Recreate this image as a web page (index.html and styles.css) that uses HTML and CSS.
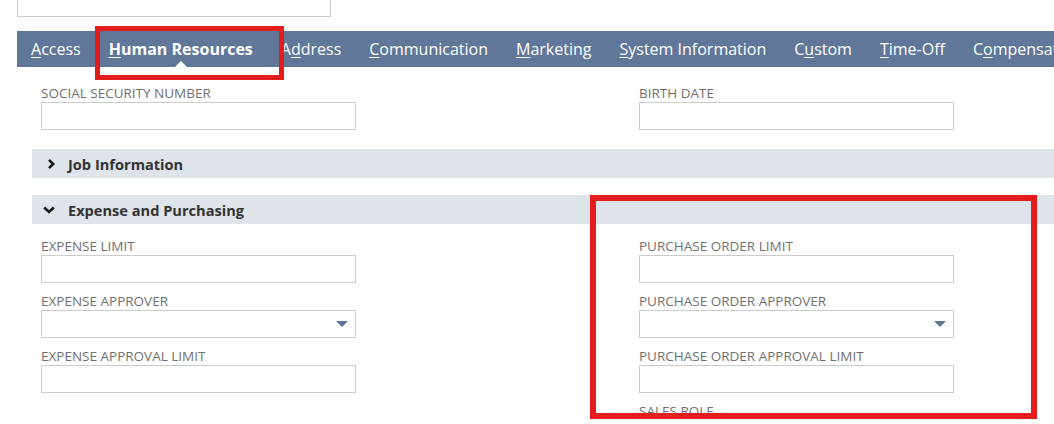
FILE: index.html
```html
<!DOCTYPE html>
<html>
<head>
<meta charset="utf-8">
<link rel="stylesheet" href="styles.css">
</head>
<body>
<div class="page">
  <div class="top-input"></div>
  <nav class="tabbar">
    <span class="tab"><u>A</u>ccess</span>
    <span class="tab active"><u>H</u>uman Resources</span>
    <span class="tab">A<u>d</u>dress</span>
    <span class="tab"><u>C</u>ommunication</span>
    <span class="tab"><u>M</u>arketing</span>
    <span class="tab"><u>S</u>ystem Information</span>
    <span class="tab">C<u>u</u>stom</span>
    <span class="tab"><u>T</u>ime-Off</span>
    <span class="tab">C<u>o</u>mpensation</span>
  </nav>

  <div class="fields first">
    <div class="col">
      <div class="field"><div class="label">SOCIAL SECURITY NUMBER</div><div class="input"></div></div>
    </div>
    <div class="col">
      <div class="field"><div class="label">BIRTH DATE</div><div class="input"></div></div>
    </div>
  </div>

  <div class="section-head collapsed">
    <svg class="chev" width="9" height="12" viewBox="0 0 9 12"><polyline points="2,1.8 6.2,6 2,10.2" fill="none" stroke="#1a1a1a" stroke-width="2.6"/></svg>
    <span>Job Information</span>
  </div>

  <div class="section-head open">
    <svg class="chev" width="14" height="10" viewBox="0 0 14 10"><polyline points="2.2,2.5 7,7 11.8,2.5" fill="none" stroke="#1a1a1a" stroke-width="2.6"/></svg>
    <span>Expense and Purchasing</span>
  </div>

  <div class="fields">
    <div class="col">
      <div class="field"><div class="label">EXPENSE LIMIT</div><div class="input"></div></div>
      <div class="field"><div class="label">EXPENSE APPROVER</div><div class="input select"><span class="arrow"></span></div></div>
      <div class="field"><div class="label">EXPENSE APPROVAL LIMIT</div><div class="input"></div></div>
    </div>
    <div class="col">
      <div class="field"><div class="label">PURCHASE ORDER LIMIT</div><div class="input"></div></div>
      <div class="field"><div class="label">PURCHASE ORDER APPROVER</div><div class="input select"><span class="arrow"></span></div></div>
      <div class="field"><div class="label">PURCHASE ORDER APPROVAL LIMIT</div><div class="input"></div></div>
      <div class="field"><div class="label">SALES ROLE</div></div>
    </div>
  </div>

  <div class="mark mark-tab"></div>
  <div class="mark mark-po"></div>
</div>
</body>
</html>
```

FILE: styles.css
```css
html, body {
  margin: 0;
  padding: 0;
  overflow: hidden;
  background: #fff;
}
body {
  font-family: "Open Sans", "Liberation Sans", sans-serif;
  width: 1054px;
  height: 424px;
}
.page {
  position: relative;
  padding-left: 17px;
  width: 1037px;
  height: 424px;
  overflow: hidden;
}
.top-input {
  width: 312px;
  height: 17px;
  margin-top: -2px;
  border: 1px solid #cccccc;
  box-sizing: content-box;
}
.tabbar {
  margin-top: 14px;
  height: 36px;
  background: #607799;
  display: flex;
  align-items: center;
  white-space: nowrap;
  overflow: hidden;
}
.tab {
  position: relative;
  flex-shrink: 0;
  color: #fff;
  font-size: 16px;
  line-height: 36px;
  padding: 0 14px;
}
.tab u {
  text-decoration-thickness: 1px;
  text-underline-offset: 2px;
}
.tab.active {
  font-weight: 700;
}
.tab.active::after {
  content: "";
  position: absolute;
  left: 50%;
  bottom: 0;
  margin-left: -6px;
  border-left: 6px solid transparent;
  border-right: 6px solid transparent;
  border-bottom: 6px solid #fff;
}
.fields {
  display: flex;
  padding-left: 24px;
  margin-top: 14px;
}
.fields.first {
  margin-top: 18px;
  margin-bottom: 19px;
}
.col {
  width: 598px;
  flex-shrink: 0;
  display: flex;
  flex-direction: column;
  gap: 10px;
}
.label {
  font-size: 13.5px;
  line-height: 17px;
  color: #707070;
  white-space: nowrap;
}
.input {
  position: relative;
  width: 313px;
  height: 26px;
  border: 1px solid #cccccc;
  background: #fff;
}
.arrow {
  position: absolute;
  right: 7px;
  top: 10px;
  width: 0;
  height: 0;
  border-left: 6px solid transparent;
  border-right: 6px solid transparent;
  border-top: 6px solid #5d7497;
}
.section-head {
  margin-left: 15px;
  height: 29px;
  background: #dfe3ea;
  display: flex;
  align-items: center;
  font-size: 14.6px;
  font-weight: 700;
  color: #333;
}
.section-head.collapsed {
  margin-bottom: 17px;
}
.section-head.collapsed .chev {
  margin-left: 15px;
  margin-right: 12px;
}
.section-head.open .chev {
  margin-left: 10px;
  margin-right: 12px;
}
.mark {
  position: absolute;
  border-style: solid;
  border-color: #e41c1c;
  box-sizing: border-box;
}
.mark-tab {
  left: 95px;
  top: 26px;
  width: 189px;
  height: 54px;
  border-width: 5px;
}
.mark-po {
  left: 590px;
  top: 195px;
  width: 447px;
  height: 224px;
  border-width: 6px;
}
```
